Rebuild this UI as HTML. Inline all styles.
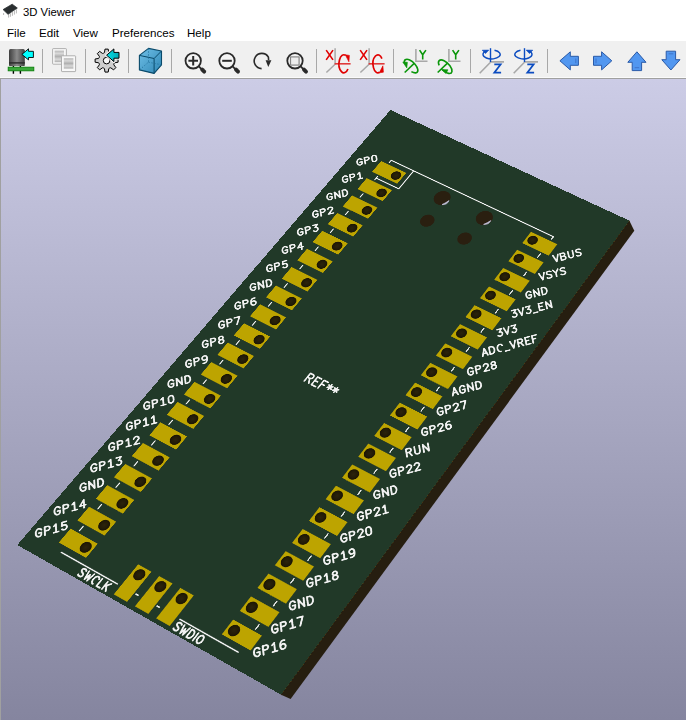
<!DOCTYPE html>
<html><head><meta charset="utf-8"><style>
*{margin:0;padding:0}
html,body{width:686px;height:720px;overflow:hidden;background:#fff;font-family:"Liberation Sans",sans-serif}
#title{position:absolute;left:0;top:0;width:686px;height:24px;background:#fff}
#title span{position:absolute;left:23px;top:6px;font-size:11.3px;color:#000}
#menu{position:absolute;left:0;top:24px;width:686px;height:17px;background:#fff;font-size:11.6px}
#menu span{position:absolute;top:2px}
#tb{position:absolute;left:0;top:41px;width:686px;height:36px;background:#f0f0f0}
#tbl{position:absolute;left:0;top:77px;width:686px;height:1px;background:#fafafa;border-bottom:1px solid #a0a0a0}
#canvas{position:absolute;left:0;top:79px;width:686px;box-sizing:border-box;border-left:1px solid #a0a0a0;height:641px;background:linear-gradient(to bottom,rgb(204,204,230) 0px,rgb(102,102,128) 921px);overflow:hidden}
#board{position:absolute;left:0;top:0;width:628px;height:1158px;transform-origin:0 0;transform:matrix3d(0.343303547,0.163261048,0,-5.89616544e-05,-0.324420307,0.308215292,0,-0.00012372913,0,0,1,0,390.5,110,0,1);background:#213928}
#side{position:absolute;left:0;top:0}
</style></head><body>
<div id="title"><svg width="22" height="22" style="position:absolute;left:0;top:0"><path d="M8.6 14.2 V17.6 M10.4 13.2 V16.8 M12.4 12.0 V15.8 M14.4 10.6 V14.6 M16.4 9.2 V13.4 M3.6 13.0 V15.0" stroke="#b8b8b8" stroke-width="1"/><polygon points="3.1,9.6 12.2,4.2 17.3,8.0 8.0,14.3" fill="#2a2e30" stroke="#2a2e30" stroke-width="0.8" stroke-linejoin="round"/></svg><span>3D Viewer</span></div>
<div id="menu"><span style="left:7px">File</span><span style="left:39px">Edit</span><span style="left:73px">View</span><span style="left:112px">Preferences</span><span style="left:187px">Help</span></div>
<div id="tb"></div><svg width="686" height="80" style="position:absolute;left:0;top:0"><defs><linearGradient id="capg" x1="0" x2="1" y1="0" y2="0"><stop offset="0" stop-color="#3e3e3e"/><stop offset="0.5" stop-color="#8a8a8a"/><stop offset="1" stop-color="#3e3e3e"/></linearGradient><linearGradient id="cyang" x1="0" x2="1"><stop offset="0" stop-color="#00e0e8"/><stop offset="1" stop-color="#00a8b4"/></linearGradient><linearGradient id="docg" x1="0" x2="0" y1="0" y2="1"><stop offset="0" stop-color="#b8b8b8"/><stop offset="0.25" stop-color="#d8d8d8"/><stop offset="0.5" stop-color="#b0b0b0"/><stop offset="0.75" stop-color="#d8d8d8"/><stop offset="1" stop-color="#b0b0b0"/></linearGradient><linearGradient id="cubeg" x1="0" x2="1" y1="0" y2="1"><stop offset="0" stop-color="#70c0e8"/><stop offset="1" stop-color="#2e86b4"/></linearGradient></defs><rect x="42" y="49" width="1" height="24" fill="#a8a8a8"/><rect x="85" y="49" width="1" height="24" fill="#a8a8a8"/><rect x="128" y="49" width="1" height="24" fill="#a8a8a8"/><rect x="171" y="49" width="1" height="24" fill="#a8a8a8"/><rect x="316" y="49" width="1" height="24" fill="#a8a8a8"/><rect x="393" y="49" width="1" height="24" fill="#a8a8a8"/><rect x="470" y="49" width="1" height="24" fill="#a8a8a8"/><rect x="547" y="49" width="1" height="24" fill="#a8a8a8"/><path d="M13.4 65.5 V67.2 M20.4 65.5 V67.2 M13.4 70.8 V73.8 M20.4 70.8 V73.8" stroke="#000" stroke-width="1.4"/><path d="M9 50.6 Q9 49 10.6 49 H23.2 Q24.8 49 24.8 50.6 V65.2 Q24.8 65.9 24 65.9 H9.8 Q9 65.9 9 65.2 Z" fill="url(#capg)"/><rect x="9" y="62.2" width="15.8" height="1.4" fill="#2a2a2a"/><rect x="8.2" y="67.2" width="25.6" height="3.6" fill="#3aa83a" stroke="#0a800a" stroke-width="0.9"/><path d="M21.9 54.4 L28.5 48.8 V51.3 H33.4 V57.5 H28.5 V59.9 Z" fill="#00ffff" stroke="#000" stroke-width="0.9" stroke-linejoin="miter"/><rect x="52.6" y="48.6" width="13.8" height="15.6" rx="0.6" fill="#f8f8f8" stroke="#a8a8a8" stroke-width="0.9"/><rect x="54.6" y="50.6" width="9.4" height="11.6" fill="url(#docg)"/><rect x="61.5" y="55.8" width="14.1" height="15.8" rx="0.6" fill="#f8f8f8" stroke="#a8a8a8" stroke-width="0.9"/><rect x="63.8" y="58.2" width="9.6" height="10.4" fill="url(#docg)"/><polygon points="104.45,52.58 104.99,49.11 108.21,49.11 108.75,52.58 109.66,53.21 110.75,53.41 113.58,51.34 115.86,53.62 113.79,56.45 113.99,57.54 114.62,58.45 118.09,58.99 118.09,62.21 114.62,62.75 113.99,63.66 113.79,64.75 115.86,67.58 113.58,69.86 110.75,67.79 109.66,67.99 108.75,68.62 108.21,72.09 104.99,72.09 104.45,68.62 103.54,67.99 102.45,67.79 99.62,69.86 97.34,67.58 99.41,64.75 99.21,63.66 98.58,62.75 95.11,62.21 95.11,58.99 98.58,58.45 99.21,57.54 99.41,56.45 97.34,53.62 99.62,51.34 102.45,53.41 103.54,53.21" fill="#cfcfcf" stroke="#000" stroke-width="1" stroke-linejoin="round"/><circle cx="106.60" cy="60.60" r="3.3" fill="#f8f8f8" stroke="#000" stroke-width="1"/><path d="M106.6 55.2 L113.9 48.9 V52.4 H119.0 V58.2 H113.9 V61.6 Z" fill="#f4f4f4" stroke="#f4f4f4" stroke-width="3" stroke-linejoin="round"/><path d="M106.6 55.2 L113.9 48.9 V52.4 H119.0 V58.2 H113.9 V61.6 Z" fill="url(#cyang)" stroke="#000" stroke-width="1" stroke-linejoin="miter"/><path d="M139.4 55.4 L148.5 48.4 L161.5 51 V64.8 L154.1 73.4 L139.4 69.9 Z" fill="url(#cubeg)" stroke="#0a4a6a" stroke-width="1.1" stroke-linejoin="round"/><path d="M139.4 55.4 L154.1 58.5 L161.5 51 M154.1 58.5 V73.4" fill="none" stroke="#0a4a6a" stroke-width="1"/><path d="M148.5 48.4 V62.2 L139.4 69.9 M148.5 62.2 L161.5 64.8" fill="none" stroke="#1a6a94" stroke-width="0.8" stroke-dasharray="1.2 1.8"/><circle cx="193.20" cy="60.8" r="7.7" fill="#f4f4f4" stroke="#2a2a2a" stroke-width="1.8"/><path d="M198.60 66.2 L202.00 69.6" stroke="#2a2a2a" stroke-width="1.8"/><path d="M202.20 69.6 L204.20 71.6" stroke="#2a2a2a" stroke-width="3.9" stroke-linecap="round"/><path d="M188.40 60.8 H198.00 M193.20 56.0 V65.6" stroke="#2a2a2a" stroke-width="2"/><circle cx="227.00" cy="60.8" r="7.7" fill="#f4f4f4" stroke="#2a2a2a" stroke-width="1.8"/><path d="M232.40 66.2 L235.80 69.6" stroke="#2a2a2a" stroke-width="1.8"/><path d="M236.00 69.6 L238.00 71.6" stroke="#2a2a2a" stroke-width="3.9" stroke-linecap="round"/><path d="M222.20 60.8 H231.80" stroke="#2a2a2a" stroke-width="2"/><path d="M261.6 68.6 A7.6 7.6 0 1 1 268.4 57.2 L268.6 60.0" stroke="#2a2a2a" stroke-width="1.6" fill="none"/><path d="M265.6 60.2 L271.4 60.2 L268.3 67.0 Z" fill="#2a2a2a"/><circle cx="295.00" cy="60.8" r="7.7" fill="#f4f4f4" stroke="#2a2a2a" stroke-width="1.8"/><path d="M300.40 66.2 L303.80 69.6" stroke="#2a2a2a" stroke-width="1.8"/><path d="M304.00 69.6 L306.00 71.6" stroke="#2a2a2a" stroke-width="3.9" stroke-linecap="round"/><rect x="290.50" y="56.9" width="8.6" height="8.2" fill="#ececec" stroke="#858585" stroke-width="1.2"/><path d="M326.20 50.1 L333.00 59.9 M333.00 50.1 L326.20 59.9" stroke="#e00000" stroke-width="1.6" fill="none"/><path d="M335.10 48.2 V64.2 L326.40 72.5" stroke="#a8a8a8" stroke-width="1.5" fill="none"/><path d="M334.60 63.8 H350.60" stroke="#e03a3a" stroke-width="1.6" fill="none"/><path d="M347.92 68.93 A4.90 9.00 0 1 1 345.61 55.34" stroke="#e00000" stroke-width="1.7" fill="none"/><path d="M345.30 54.8 L349.40 55.4 L348.90 61.8 Z" fill="#e00000" stroke="#e00000" stroke-width="0.6" stroke-linejoin="round"/><path d="M360.20 50.1 L367.00 59.9 M367.00 50.1 L360.20 59.9" stroke="#e00000" stroke-width="1.6" fill="none"/><path d="M369.10 48.2 V64.2 L360.40 72.5" stroke="#a8a8a8" stroke-width="1.5" fill="none"/><path d="M368.60 63.8 H384.60" stroke="#e03a3a" stroke-width="1.6" fill="none"/><path d="M381.92 58.67 A4.90 9.00 0 1 0 379.61 72.26" stroke="#e00000" stroke-width="1.7" fill="none"/><path d="M379.30 72.8 L383.40 72.2 L382.90 65.8 Z" fill="#e00000" stroke="#e00000" stroke-width="0.6" stroke-linejoin="round"/><path d="M415.90 49.1 V61.3 H427.50" stroke="#a8a8a8" stroke-width="1.6" fill="none"/><path d="M419.60 50.1 L422.70 54.8 L425.90 50.1 M422.70 54.8 V59.4" stroke="#0a960a" stroke-width="1.6" fill="none"/><path d="M404.70 72.5 L414.20 63.4" stroke="#0a960a" stroke-width="1.6" fill="none"/><path d="M411.40 71.6 A8.6 4.2 45 1 0 404.60 63.6" stroke="#0a960a" stroke-width="1.6" fill="none" transform=""/><path d="M402.80 62.0 L407.40 62.3 L406.80 67.9 Z" fill="#0a960a" stroke="#0a960a" stroke-width="0.6" stroke-linejoin="round"/><path d="M448.90 49.1 V61.3 H460.50" stroke="#a8a8a8" stroke-width="1.6" fill="none"/><path d="M452.60 50.1 L455.70 54.8 L458.90 50.1 M455.70 54.8 V59.4" stroke="#0a960a" stroke-width="1.6" fill="none"/><path d="M437.70 72.5 L447.20 63.4" stroke="#0a960a" stroke-width="1.6" fill="none"/><path d="M439.20 65.4 A8.6 4.2 45 1 1 442.40 69.8" stroke="#0a960a" stroke-width="1.6" fill="none"/><path d="M441.40 69.5 L448.00 69.8 L446.00 73.4 Z" fill="#0a960a" stroke="#0a960a" stroke-width="0.6" stroke-linejoin="round"/><path d="M490.50 61.9 H504.00 M490.50 62.2 L479.70 73.2" stroke="#a8a8a8" stroke-width="1.6" fill="none"/><path d="M490.50 48.2 V62.0" stroke="#0c4cc0" stroke-width="1.4" fill="none"/><path d="M494.50 50.2 A8.6 4.5 0 1 1 485.60 51.2" stroke="#0c4cc0" stroke-width="1.4" fill="none"/><path d="M482.20 50.2 L488.80 50.1 L485.50 53.6 Z" fill="#0c4cc0" stroke="#0c4cc0" stroke-width="0.6" stroke-linejoin="round"/><path d="M494.30 64.3 H500.70 L494.30 72.7 H501.10" stroke="#0c4cc0" stroke-width="1.7" fill="none" stroke-linejoin="miter"/><path d="M524.50 61.9 H538.00 M524.50 62.2 L513.70 73.2" stroke="#a8a8a8" stroke-width="1.6" fill="none"/><path d="M524.50 48.2 V62.0" stroke="#0c4cc0" stroke-width="1.4" fill="none"/><path d="M520.50 50.2 A8.6 4.5 0 1 0 529.40 51.2" stroke="#0c4cc0" stroke-width="1.4" fill="none"/><path d="M526.20 50.1 L532.80 50.2 L529.50 53.6 Z" fill="#0c4cc0" stroke="#0c4cc0" stroke-width="0.6" stroke-linejoin="round"/><path d="M527.30 64.3 H533.70 L527.30 72.7 H534.10" stroke="#0c4cc0" stroke-width="1.7" fill="none" stroke-linejoin="miter"/><path d="M559.9 60.8 L570.3 51.8 V56.3 H578.4 V65.3 H570.3 V69.9 Z" fill="#5297f0" stroke="#2a5aa8" stroke-width="1" stroke-linejoin="miter"/><path d="M575.8 58.5 V63.2" stroke="#3a6ac0" stroke-width="0.8"/><path d="M611.8 60.8 L601.6 51.8 V56.3 H593.5 V65.3 H601.6 V69.9 Z" fill="#5297f0" stroke="#2a5aa8" stroke-width="1" stroke-linejoin="miter"/><path d="M596.0 58.5 V63.2" stroke="#3a6ac0" stroke-width="0.8"/><path d="M636.9 51.8 L646.0 62.3 H641.6 V70.6 H632.2 V62.3 H627.8 Z" fill="#5297f0" stroke="#2a5aa8" stroke-width="1" stroke-linejoin="miter"/><path d="M634.7 67.7 H639.2" stroke="#3a6ac0" stroke-width="0.8"/><path d="M670.9 70.0 L680.0 59.7 H675.6 V51.2 H666.2 V59.7 H661.8 Z" fill="#5297f0" stroke="#2a5aa8" stroke-width="1" stroke-linejoin="miter"/><path d="M668.6 53.8 H673.3" stroke="#3a6ac0" stroke-width="0.8"/></svg><div id="tbl"></div>
<div id="canvas"></div>
<svg id="side" width="686" height="720"><polygon points="629.40,220.70 634.30,230.80 290.60,699.00 281.10,694.70" fill="#261e10"/><line x1="629.4" y1="220.7" x2="281.1" y2="694.7" stroke="#261e10" stroke-width="1.6"/></svg>
<div id="board"><svg width="628" height="1158"><defs><radialGradient id="hole" cx="0.5" cy="0.5" r="0.5"><stop offset="0" stop-color="#2c240c"/><stop offset="0.7" stop-color="#221b07"/><stop offset="1" stop-color="#1a1404"/></radialGradient></defs><rect x="66.000" y="120.800" width="67.000" height="32.000" fill="#bda400"/><ellipse cx="117.800" cy="136.800" rx="11.000" ry="11.000" fill="url(#hole)"/><rect x="458.400" y="120.800" width="67.000" height="32.000" fill="#bda400"/><ellipse cx="473.600" cy="136.800" rx="11.000" ry="11.000" fill="url(#hole)"/><rect x="66.000" y="171.600" width="67.000" height="32.000" fill="#bda400"/><ellipse cx="117.800" cy="187.600" rx="11.000" ry="11.000" fill="url(#hole)"/><rect x="458.400" y="171.600" width="67.000" height="32.000" fill="#bda400"/><ellipse cx="473.600" cy="187.600" rx="11.000" ry="11.000" fill="url(#hole)"/><rect x="66.000" y="222.400" width="67.000" height="32.000" fill="#bda400"/><ellipse cx="117.800" cy="238.400" rx="11.000" ry="11.000" fill="url(#hole)"/><rect x="458.400" y="222.400" width="67.000" height="32.000" fill="#bda400"/><ellipse cx="473.600" cy="238.400" rx="11.000" ry="11.000" fill="url(#hole)"/><rect x="66.000" y="273.200" width="67.000" height="32.000" fill="#bda400"/><ellipse cx="117.800" cy="289.200" rx="11.000" ry="11.000" fill="url(#hole)"/><rect x="458.400" y="273.200" width="67.000" height="32.000" fill="#bda400"/><ellipse cx="473.600" cy="289.200" rx="11.000" ry="11.000" fill="url(#hole)"/><rect x="66.000" y="324.000" width="67.000" height="32.000" fill="#bda400"/><ellipse cx="117.800" cy="340.000" rx="11.000" ry="11.000" fill="url(#hole)"/><rect x="458.400" y="324.000" width="67.000" height="32.000" fill="#bda400"/><ellipse cx="473.600" cy="340.000" rx="11.000" ry="11.000" fill="url(#hole)"/><rect x="66.000" y="374.800" width="67.000" height="32.000" fill="#bda400"/><ellipse cx="117.800" cy="390.800" rx="11.000" ry="11.000" fill="url(#hole)"/><rect x="458.400" y="374.800" width="67.000" height="32.000" fill="#bda400"/><ellipse cx="473.600" cy="390.800" rx="11.000" ry="11.000" fill="url(#hole)"/><rect x="66.000" y="425.600" width="67.000" height="32.000" fill="#bda400"/><ellipse cx="117.800" cy="441.600" rx="11.000" ry="11.000" fill="url(#hole)"/><rect x="458.400" y="425.600" width="67.000" height="32.000" fill="#bda400"/><ellipse cx="473.600" cy="441.600" rx="11.000" ry="11.000" fill="url(#hole)"/><rect x="66.000" y="476.400" width="67.000" height="32.000" fill="#bda400"/><ellipse cx="117.800" cy="492.400" rx="11.000" ry="11.000" fill="url(#hole)"/><rect x="458.400" y="476.400" width="67.000" height="32.000" fill="#bda400"/><ellipse cx="473.600" cy="492.400" rx="11.000" ry="11.000" fill="url(#hole)"/><rect x="66.000" y="527.200" width="67.000" height="32.000" fill="#bda400"/><ellipse cx="117.800" cy="543.200" rx="11.000" ry="11.000" fill="url(#hole)"/><rect x="458.400" y="527.200" width="67.000" height="32.000" fill="#bda400"/><ellipse cx="473.600" cy="543.200" rx="11.000" ry="11.000" fill="url(#hole)"/><rect x="66.000" y="578.000" width="67.000" height="32.000" fill="#bda400"/><ellipse cx="117.800" cy="594.000" rx="11.000" ry="11.000" fill="url(#hole)"/><rect x="458.400" y="578.000" width="67.000" height="32.000" fill="#bda400"/><ellipse cx="473.600" cy="594.000" rx="11.000" ry="11.000" fill="url(#hole)"/><rect x="66.000" y="628.800" width="67.000" height="32.000" fill="#bda400"/><ellipse cx="117.800" cy="644.800" rx="11.000" ry="11.000" fill="url(#hole)"/><rect x="458.400" y="628.800" width="67.000" height="32.000" fill="#bda400"/><ellipse cx="473.600" cy="644.800" rx="11.000" ry="11.000" fill="url(#hole)"/><rect x="66.000" y="679.600" width="67.000" height="32.000" fill="#bda400"/><ellipse cx="117.800" cy="695.600" rx="11.000" ry="11.000" fill="url(#hole)"/><rect x="458.400" y="679.600" width="67.000" height="32.000" fill="#bda400"/><ellipse cx="473.600" cy="695.600" rx="11.000" ry="11.000" fill="url(#hole)"/><rect x="66.000" y="730.400" width="67.000" height="32.000" fill="#bda400"/><ellipse cx="117.800" cy="746.400" rx="11.000" ry="11.000" fill="url(#hole)"/><rect x="458.400" y="730.400" width="67.000" height="32.000" fill="#bda400"/><ellipse cx="473.600" cy="746.400" rx="11.000" ry="11.000" fill="url(#hole)"/><rect x="66.000" y="781.200" width="67.000" height="32.000" fill="#bda400"/><ellipse cx="117.800" cy="797.200" rx="11.000" ry="11.000" fill="url(#hole)"/><rect x="458.400" y="781.200" width="67.000" height="32.000" fill="#bda400"/><ellipse cx="473.600" cy="797.200" rx="11.000" ry="11.000" fill="url(#hole)"/><rect x="66.000" y="832.000" width="67.000" height="32.000" fill="#bda400"/><ellipse cx="117.800" cy="848.000" rx="11.000" ry="11.000" fill="url(#hole)"/><rect x="458.400" y="832.000" width="67.000" height="32.000" fill="#bda400"/><ellipse cx="473.600" cy="848.000" rx="11.000" ry="11.000" fill="url(#hole)"/><rect x="66.000" y="882.800" width="67.000" height="32.000" fill="#bda400"/><ellipse cx="117.800" cy="898.800" rx="11.000" ry="11.000" fill="url(#hole)"/><rect x="458.400" y="882.800" width="67.000" height="32.000" fill="#bda400"/><ellipse cx="473.600" cy="898.800" rx="11.000" ry="11.000" fill="url(#hole)"/><rect x="66.000" y="933.600" width="67.000" height="32.000" fill="#bda400"/><ellipse cx="117.800" cy="949.600" rx="11.000" ry="11.000" fill="url(#hole)"/><rect x="458.400" y="933.600" width="67.000" height="32.000" fill="#bda400"/><ellipse cx="473.600" cy="949.600" rx="11.000" ry="11.000" fill="url(#hole)"/><rect x="66.000" y="984.400" width="67.000" height="32.000" fill="#bda400"/><ellipse cx="117.800" cy="1000.400" rx="11.000" ry="11.000" fill="url(#hole)"/><rect x="458.400" y="984.400" width="67.000" height="32.000" fill="#bda400"/><ellipse cx="473.600" cy="1000.400" rx="11.000" ry="11.000" fill="url(#hole)"/><rect x="66.000" y="1035.200" width="67.000" height="32.000" fill="#bda400"/><ellipse cx="117.800" cy="1051.200" rx="11.000" ry="11.000" fill="url(#hole)"/><rect x="458.400" y="1035.200" width="67.000" height="32.000" fill="#bda400"/><ellipse cx="473.600" cy="1051.200" rx="11.000" ry="11.000" fill="url(#hole)"/><rect x="66.000" y="1086.000" width="67.000" height="32.000" fill="#bda400"/><ellipse cx="117.800" cy="1102.000" rx="11.000" ry="11.000" fill="url(#hole)"/><rect x="458.400" y="1086.000" width="67.000" height="32.000" fill="#bda400"/><ellipse cx="473.600" cy="1102.000" rx="11.000" ry="11.000" fill="url(#hole)"/><rect x="228.900" y="1082.800" width="32.000" height="67.000" fill="#bda400"/><ellipse cx="244.900" cy="1098.000" rx="11.000" ry="11.000" fill="url(#hole)"/><rect x="279.700" y="1082.800" width="32.000" height="67.000" fill="#bda400"/><ellipse cx="295.700" cy="1098.000" rx="11.000" ry="11.000" fill="url(#hole)"/><rect x="330.500" y="1082.800" width="32.000" height="67.000" fill="#bda400"/><ellipse cx="346.500" cy="1098.000" rx="11.000" ry="11.000" fill="url(#hole)"/><ellipse cx="240.600" cy="138.000" rx="18.000" ry="18.000" fill="#2a1f10"/><ellipse cx="350.600" cy="138.000" rx="18.000" ry="18.000" fill="#2a1f10"/><ellipse cx="247.200" cy="200.000" rx="15.200" ry="15.200" fill="#2a1f10"/><ellipse cx="344.000" cy="200.000" rx="15.200" ry="15.200" fill="#2a1f10"/><path d="M84.000 116.000 L84.000 109.000 L507.400 109.000 L507.400 116.000 M144.000 109.000 L144.000 162.000 L84.000 162.000 L84.000 158.000 M84.000 157.400 L84.000 167.000 M507.400 157.400 L507.400 167.000 M84.000 208.200 L84.000 217.800 M507.400 208.200 L507.400 217.800 M84.000 259.000 L84.000 268.600 M507.400 259.000 L507.400 268.600 M84.000 309.800 L84.000 319.400 M507.400 309.800 L507.400 319.400 M84.000 360.600 L84.000 370.200 M507.400 360.600 L507.400 370.200 M84.000 411.400 L84.000 421.000 M507.400 411.400 L507.400 421.000 M84.000 462.200 L84.000 471.800 M507.400 462.200 L507.400 471.800 M84.000 513.000 L84.000 522.600 M507.400 513.000 L507.400 522.600 M84.000 563.800 L84.000 573.400 M507.400 563.800 L507.400 573.400 M84.000 614.600 L84.000 624.200 M507.400 614.600 L507.400 624.200 M84.000 665.400 L84.000 675.000 M507.400 665.400 L507.400 675.000 M84.000 716.200 L84.000 725.800 M507.400 716.200 L507.400 725.800 M84.000 767.000 L84.000 776.600 M507.400 767.000 L507.400 776.600 M84.000 817.800 L84.000 827.400 M507.400 817.800 L507.400 827.400 M84.000 868.600 L84.000 878.200 M507.400 868.600 L507.400 878.200 M84.000 919.400 L84.000 929.000 M507.400 919.400 L507.400 929.000 M84.000 970.200 L84.000 979.800 M507.400 970.200 L507.400 979.800 M84.000 1021.000 L84.000 1030.600 M507.400 1021.000 L507.400 1030.600 M84.000 1071.800 L84.000 1081.400 M507.400 1071.800 L507.400 1081.400 M84.000 1131.000 L220.800 1131.000 M370.600 1131.000 L507.400 1131.000 M265.000 1130.400 L270.400 1130.400 M315.800 1130.400 L321.200 1130.400" fill="none" stroke="#f2f2f2" stroke-width="2.600" stroke-linecap="round" stroke-linejoin="round"/><path fill="none" stroke="#f2f2f2" stroke-width="3.500" stroke-linecap="round" stroke-linejoin="round" d="M26.49 137.40 L24.31 136.94 L22.34 137.15 L20.76 138.01 L19.72 139.45 L19.32 141.32 L19.59 143.46 L20.51 145.67 L21.99 147.74 L23.89 149.49 L26.05 150.74 L28.25 151.39 L30.30 151.37 L32.01 150.69 L33.21 149.40 L33.81 147.64 L33.73 145.55 L30.37 141.61 L27.19 144.79 M40.21 142.59 L28.19 130.57 L32.05 126.71 L32.05 126.71 L33.87 125.69 L36.01 125.75 L37.89 126.88 L39.02 128.76 L39.08 130.90 L38.06 132.72 L34.20 136.58 M42.77 123.20 L41.42 120.94 L41.35 118.38 L42.57 116.19 L44.76 114.97 L47.32 115.04 L49.58 116.39 L54.39 121.20 L55.74 123.45 L55.81 126.02 L54.59 128.21 L52.40 129.43 L49.84 129.36 L47.58 128.01 L42.77 123.20 M26.64 188.20 L24.45 187.74 L22.48 187.95 L20.91 188.81 L19.87 190.25 L19.47 192.12 L19.74 194.26 L20.65 196.47 L22.14 198.54 L24.04 200.29 L26.20 201.54 L28.40 202.19 L30.45 202.17 L32.16 201.49 L33.36 200.20 L33.95 198.44 L33.87 196.35 L30.51 192.41 L27.33 195.59 M40.35 193.39 L28.33 181.37 L32.20 177.51 L32.20 177.51 L34.02 176.49 L36.16 176.55 L38.04 177.68 L39.16 179.56 L39.22 181.70 L38.21 183.52 L34.34 187.38 M42.75 172.25 L42.94 166.76 L54.97 178.78 M51.78 181.96 L57.92 175.83 M25.70 240.08 L23.52 239.62 L21.55 239.83 L19.97 240.69 L18.93 242.13 L18.53 244.00 L18.80 246.14 L19.72 248.35 L21.20 250.43 L23.11 252.17 L25.26 253.42 L27.47 254.07 L29.52 254.05 L31.22 253.37 L32.43 252.08 L33.02 250.32 L32.94 248.23 L29.58 244.30 L26.40 247.48 M39.46 245.23 L27.44 233.21 L46.51 238.19 L34.49 226.17 M53.93 230.76 L51.09 233.60 L39.07 221.58 L41.91 218.74 L41.91 218.74 L43.98 217.59 L46.64 217.53 L49.51 218.57 L52.13 220.55 L54.11 223.17 L55.14 226.03 L55.08 228.70 L53.93 230.76 M26.93 289.80 L24.75 289.34 L22.78 289.55 L21.20 290.41 L20.16 291.85 L19.76 293.72 L20.03 295.86 L20.95 298.07 L22.43 300.14 L24.34 301.89 L26.49 303.14 L28.70 303.79 L30.75 303.77 L32.45 303.09 L33.66 301.80 L34.25 300.04 L34.17 297.95 L30.81 294.01 L27.63 297.19 M40.65 294.99 L28.63 282.97 L32.49 279.11 L32.49 279.11 L34.31 278.09 L36.45 278.15 L38.34 279.28 L39.46 281.16 L39.52 283.30 L38.50 285.12 L34.64 288.98 M42.44 274.73 L41.62 272.54 L41.94 270.21 L43.32 268.30 L45.44 267.27 L47.78 267.36 L49.79 268.55 L50.76 269.98 L51.62 284.02 L58.67 276.97 M27.08 340.60 L24.90 340.14 L22.93 340.35 L21.35 341.21 L20.31 342.65 L19.91 344.52 L20.18 346.66 L21.10 348.87 L22.58 350.94 L24.48 352.69 L26.64 353.94 L28.84 354.59 L30.89 354.57 L32.60 353.89 L33.80 352.60 L34.39 350.84 L34.32 348.75 L30.96 344.81 L27.78 347.99 M40.80 345.79 L28.78 333.77 L32.64 329.91 L32.64 329.91 L34.46 328.89 L36.60 328.95 L38.48 330.08 L39.61 331.96 L39.67 334.10 L38.65 335.92 L34.79 339.78 M40.32 322.23 L46.57 315.98 L47.63 324.54 L47.73 323.96 L49.99 322.69 L52.64 322.77 L54.98 324.16 L56.37 326.50 L56.44 329.15 L55.18 331.41 L52.92 332.67 L50.27 332.60 M27.23 391.40 L25.04 390.94 L23.07 391.15 L21.50 392.01 L20.46 393.45 L20.06 395.32 L20.33 397.46 L21.24 399.67 L22.72 401.74 L24.63 403.49 L26.79 404.74 L28.99 405.39 L31.04 405.37 L32.75 404.69 L33.95 403.40 L34.54 401.64 L34.46 399.55 L31.10 395.61 L27.92 398.79 M40.94 396.59 L28.92 384.57 L32.79 380.71 L32.79 380.71 L34.61 379.69 L36.75 379.75 L38.63 380.88 L39.75 382.76 L39.81 384.90 L38.80 386.72 L34.93 390.58 M57.03 380.51 L45.01 368.48 L47.96 381.88 L55.34 374.50 M27.37 442.20 L25.19 441.74 L23.22 441.95 L21.64 442.81 L20.61 444.25 L20.20 446.12 L20.47 448.26 L21.39 450.47 L22.87 452.54 L24.78 454.29 L26.93 455.54 L29.14 456.19 L31.19 456.17 L32.90 455.49 L34.10 454.20 L34.69 452.44 L34.61 450.35 L31.25 446.41 L28.07 449.59 M41.09 447.39 L29.07 435.37 L32.93 431.51 L32.93 431.51 L34.76 430.49 L36.89 430.55 L38.78 431.68 L39.90 433.56 L39.96 435.70 L38.94 437.52 L35.08 441.38 M46.41 418.04 L40.95 423.49 L45.80 429.47 L46.51 428.57 L47.61 425.76 L50.16 424.17 L53.24 424.40 L55.74 426.34 L56.75 429.31 L55.91 432.22 L53.52 434.03 L50.44 434.08 M26.44 494.08 L24.26 493.62 L22.29 493.83 L20.71 494.69 L19.67 496.13 L19.27 498.00 L19.54 500.14 L20.46 502.35 L21.94 504.43 L23.84 506.17 L26.00 507.42 L28.20 508.07 L30.25 508.05 L31.96 507.37 L33.16 506.08 L33.76 504.32 L33.68 502.23 L30.32 498.30 L27.14 501.48 M40.20 499.23 L28.18 487.21 L47.24 492.19 L35.22 480.17 M54.67 484.76 L51.83 487.60 L39.81 475.58 L42.65 472.74 L42.65 472.74 L44.72 471.59 L47.38 471.53 L50.24 472.57 L52.86 474.55 L54.84 477.17 L55.88 480.03 L55.82 482.70 L54.67 484.76 M27.67 543.80 L25.49 543.34 L23.52 543.55 L21.94 544.41 L20.90 545.85 L20.50 547.72 L20.77 549.86 L21.69 552.07 L23.17 554.14 L25.07 555.89 L27.23 557.14 L29.43 557.79 L31.48 557.77 L33.19 557.09 L34.39 555.80 L34.98 554.04 L34.91 551.95 L31.55 548.01 L28.37 551.19 M41.39 548.99 L29.37 536.97 L33.23 533.11 L33.23 533.11 L35.05 532.09 L37.19 532.15 L39.07 533.28 L40.19 535.16 L40.26 537.30 L39.24 539.12 L35.38 542.98 M46.49 520.33 L44.32 522.02 L43.11 524.67 L43.55 528.07 L45.75 531.41 L48.76 534.41 L48.76 534.41 L47.41 532.15 L47.34 529.58 L48.56 527.40 L50.74 526.18 L53.31 526.25 L55.57 527.60 L56.92 529.85 L56.99 532.42 L55.77 534.61 L53.58 535.83 L51.02 535.76 L48.76 534.41 M27.81 594.60 L25.63 594.14 L23.66 594.35 L22.09 595.21 L21.05 596.65 L20.65 598.52 L20.92 600.66 L21.83 602.87 L23.31 604.94 L25.22 606.69 L27.38 607.94 L29.58 608.59 L31.63 608.57 L33.34 607.89 L34.54 606.60 L35.13 604.84 L35.05 602.75 L31.69 598.81 L28.51 601.99 M41.53 599.79 L29.51 587.77 L33.37 583.91 L33.37 583.91 L35.20 582.89 L37.34 582.95 L39.22 584.08 L40.34 585.96 L40.40 588.10 L39.39 589.92 L35.52 593.78 M40.37 576.91 L47.42 569.87 L54.89 586.43 M27.96 645.40 L25.78 644.94 L23.81 645.15 L22.23 646.01 L21.20 647.45 L20.79 649.32 L21.06 651.46 L21.98 653.67 L23.46 655.74 L25.37 657.49 L27.52 658.74 L29.73 659.39 L31.78 659.37 L33.48 658.69 L34.69 657.40 L35.28 655.64 L35.20 653.55 L31.84 649.61 L28.66 652.79 M41.68 650.59 L29.66 638.57 L33.52 634.71 L33.52 634.71 L35.34 633.69 L37.48 633.75 L39.37 634.88 L40.49 636.76 L40.55 638.90 L39.53 640.72 L35.67 644.58 M49.57 629.72 L47.73 630.82 L45.63 630.89 L43.85 629.91 L42.87 628.13 L42.94 626.04 L44.04 624.19 L45.89 623.08 L47.98 623.01 L49.76 624.00 L50.75 625.78 L50.68 627.87 L49.57 629.72 M49.57 629.72 L51.71 628.45 L54.15 628.39 L56.23 629.56 L57.39 631.64 L57.33 634.07 L56.06 636.21 L53.93 637.48 L51.49 637.54 L49.41 636.37 L48.24 634.29 L48.30 631.86 L49.57 629.72 M28.11 696.20 L25.93 695.74 L23.96 695.95 L22.38 696.81 L21.34 698.25 L20.94 700.12 L21.21 702.26 L22.13 704.47 L23.61 706.54 L25.52 708.29 L27.67 709.54 L29.88 710.19 L31.93 710.17 L33.63 709.49 L34.84 708.20 L35.43 706.44 L35.35 704.35 L31.99 700.41 L28.81 703.59 M41.83 701.39 L29.81 689.37 L33.67 685.51 L33.67 685.51 L35.49 684.49 L37.63 684.55 L39.51 685.68 L40.64 687.56 L40.70 689.70 L39.68 691.52 L35.82 695.38 M51.21 675.19 L52.55 677.45 L52.62 680.01 L51.40 682.20 L49.22 683.42 L46.65 683.35 L44.39 682.00 L43.04 679.74 L42.97 677.18 L44.19 674.99 L46.38 673.77 L48.95 673.84 L51.21 675.19 L54.21 678.19 L56.41 681.52 L56.97 685.05 L55.64 687.58 L53.47 689.27 M27.17 748.08 L24.99 747.62 L23.02 747.83 L21.45 748.69 L20.41 750.13 L20.01 752.00 L20.28 754.14 L21.19 756.35 L22.67 758.43 L24.58 760.17 L26.74 761.42 L28.94 762.07 L30.99 762.05 L32.70 761.37 L33.90 760.08 L34.49 758.32 L34.41 756.23 L31.05 752.30 L27.87 755.48 M40.94 753.23 L28.92 741.21 L47.98 746.19 L35.96 734.17 M55.41 738.76 L52.57 741.60 L40.55 729.58 L43.39 726.74 L43.39 726.74 L45.45 725.59 L48.12 725.53 L50.98 726.57 L53.60 728.55 L55.58 731.17 L56.62 734.03 L56.56 736.70 L55.41 738.76 M17.59 808.61 L15.40 808.15 L13.43 808.37 L11.86 809.23 L10.82 810.67 L10.42 812.54 L10.69 814.68 L11.60 816.89 L13.09 818.96 L14.99 820.71 L17.15 821.96 L19.35 822.61 L21.40 822.59 L23.11 821.90 L24.31 820.62 L24.90 818.86 L24.82 816.77 L21.46 812.83 L18.28 816.01 M31.30 813.81 L19.28 801.79 L23.15 797.93 L23.15 797.93 L24.97 796.91 L27.11 796.97 L28.99 798.09 L30.11 799.98 L30.17 802.12 L29.16 803.94 L25.29 807.80 M33.70 792.66 L33.89 787.18 L45.91 799.20 M42.73 802.38 L48.87 796.25 M44.68 783.60 L43.34 781.34 L43.26 778.78 L44.49 776.59 L46.67 775.37 L49.24 775.44 L51.50 776.79 L56.31 781.60 L57.65 783.85 L57.73 786.42 L56.51 788.61 L54.32 789.83 L51.75 789.76 L49.49 788.41 L44.68 783.60 M17.73 859.41 L15.55 858.95 L13.58 859.17 L12.00 860.03 L10.97 861.47 L10.56 863.34 L10.83 865.48 L11.75 867.69 L13.23 869.76 L15.14 871.51 L17.29 872.76 L19.50 873.41 L21.55 873.39 L23.26 872.70 L24.46 871.42 L25.05 869.66 L24.97 867.57 L21.61 863.63 L18.43 866.81 M31.45 864.61 L19.43 852.59 L23.29 848.73 L23.29 848.73 L25.12 847.71 L27.26 847.77 L29.14 848.89 L30.26 850.78 L30.32 852.92 L29.30 854.74 L25.44 858.60 M33.85 843.46 L34.04 837.98 L46.06 850.00 M42.88 853.18 L49.02 847.05 M44.66 832.65 L44.86 827.16 L56.88 839.18 M53.70 842.36 L59.83 836.23 M17.88 910.21 L15.70 909.75 L13.73 909.97 L12.15 910.83 L11.11 912.27 L10.71 914.14 L10.98 916.28 L11.90 918.49 L13.38 920.56 L15.29 922.31 L17.44 923.56 L19.65 924.21 L21.70 924.19 L23.40 923.50 L24.61 922.22 L25.20 920.46 L25.12 918.37 L21.76 914.43 L18.58 917.61 M31.60 915.41 L19.58 903.39 L23.44 899.53 L23.44 899.53 L25.26 898.51 L27.40 898.57 L29.29 899.69 L30.41 901.58 L30.47 903.72 L29.45 905.54 L25.59 909.40 M33.99 894.26 L34.19 888.78 L46.21 900.80 M43.03 903.98 L49.16 897.85 M44.21 884.33 L43.39 882.14 L43.71 879.81 L45.09 877.90 L47.21 876.87 L49.55 876.96 L51.55 878.15 L52.53 879.58 L53.39 893.62 L60.44 886.57 M18.03 961.01 L15.85 960.55 L13.88 960.77 L12.30 961.63 L11.26 963.07 L10.86 964.94 L11.13 967.08 L12.05 969.29 L13.53 971.36 L15.43 973.11 L17.59 974.36 L19.79 975.01 L21.84 974.99 L23.55 974.30 L24.75 973.02 L25.34 971.26 L25.27 969.17 L21.91 965.23 L18.73 968.41 M31.75 966.21 L19.73 954.19 L23.59 950.33 L23.59 950.33 L25.41 949.31 L27.55 949.37 L29.43 950.49 L30.56 952.38 L30.62 954.52 L29.60 956.34 L25.74 960.20 M34.14 945.06 L34.34 939.58 L46.36 951.60 M43.18 954.78 L49.31 948.65 M42.09 931.83 L48.34 925.58 L49.40 934.14 L49.50 933.56 L51.76 932.29 L54.41 932.37 L56.74 933.76 L58.14 936.10 L58.21 938.75 L56.95 941.01 L54.69 942.27 L52.04 942.20 M27.91 1002.08 L25.73 1001.62 L23.76 1001.83 L22.18 1002.69 L21.15 1004.13 L20.74 1006.00 L21.01 1008.14 L21.93 1010.35 L23.41 1012.43 L25.32 1014.17 L27.47 1015.42 L29.68 1016.07 L31.73 1016.05 L33.43 1015.37 L34.64 1014.08 L35.23 1012.32 L35.15 1010.23 L31.79 1006.30 L28.61 1009.48 M41.67 1007.23 L29.65 995.21 L48.72 1000.19 L36.70 988.17 M56.14 992.76 L53.30 995.60 L41.28 983.58 L44.12 980.74 L44.12 980.74 L46.19 979.59 L48.86 979.53 L51.72 980.57 L54.34 982.55 L56.32 985.17 L57.36 988.03 L57.29 990.70 L56.14 992.76 M18.32 1062.61 L16.14 1062.15 L14.17 1062.37 L12.59 1063.23 L11.56 1064.67 L11.15 1066.54 L11.42 1068.68 L12.34 1070.89 L13.82 1072.96 L15.73 1074.71 L17.88 1075.96 L20.09 1076.61 L22.14 1076.59 L23.84 1075.90 L25.05 1074.62 L25.64 1072.86 L25.56 1070.77 L22.20 1066.83 L19.02 1070.01 M32.04 1067.81 L20.02 1055.79 L23.88 1051.93 L23.88 1051.93 L25.71 1050.91 L27.84 1050.97 L29.73 1052.09 L30.85 1053.98 L30.91 1056.12 L29.89 1057.94 L26.03 1061.80 M34.44 1046.66 L34.63 1041.18 L46.65 1053.20 M43.47 1056.38 L49.61 1050.25 M58.95 1040.91 L46.93 1028.88 L49.88 1042.28 L57.26 1034.90 M18.47 1113.41 L16.29 1112.95 L14.32 1113.17 L12.74 1114.03 L11.70 1115.47 L11.30 1117.34 L11.57 1119.48 L12.49 1121.69 L13.97 1123.76 L15.88 1125.51 L18.03 1126.76 L20.24 1127.41 L22.29 1127.39 L23.99 1126.70 L25.20 1125.42 L25.79 1123.66 L25.71 1121.57 L22.35 1117.63 L19.17 1120.81 M32.19 1118.61 L20.17 1106.59 L24.03 1102.73 L24.03 1102.73 L25.85 1101.71 L27.99 1101.77 L29.87 1102.89 L31.00 1104.78 L31.06 1106.92 L30.04 1108.74 L26.18 1112.60 M34.58 1097.46 L34.78 1091.98 L46.80 1104.00 M43.62 1107.18 L49.75 1101.05 M48.32 1078.44 L42.87 1083.89 L47.71 1089.87 L48.43 1088.97 L49.52 1086.16 L52.08 1084.57 L55.16 1084.80 L57.66 1086.74 L58.67 1089.71 L57.83 1092.62 L55.43 1094.43 L52.36 1094.48 M533.10 148.66 L548.87 156.93 L540.60 141.16 M549.64 143.42 L553.95 139.10 L553.73 139.33 L554.48 137.82 L554.28 135.95 L553.17 134.23 L551.46 133.13 L549.59 132.92 L548.08 133.68 L543.99 137.77 L556.01 149.79 L560.10 145.70 L560.10 145.70 L561.09 143.85 L560.96 141.65 L559.75 139.68 L557.78 138.46 L555.57 138.34 L553.73 139.33 M555.62 126.14 L564.03 134.55 L565.67 135.68 L567.58 136.11 L569.47 135.78 L571.05 134.75 L572.08 133.17 L572.40 131.29 L571.97 129.38 L570.85 127.74 L562.43 119.32 M575.24 109.41 L572.67 109.57 L570.39 111.37 L568.70 113.78 L568.88 116.00 L570.92 118.05 L573.15 118.23 L579.04 115.94 L581.38 116.01 L583.41 117.58 L584.30 120.29 L582.41 123.39 L580.00 125.08 L577.56 125.36 M532.78 199.46 L548.55 207.73 L540.28 191.96 M551.66 183.47 L549.09 183.63 L546.81 185.43 L545.13 187.84 L545.31 190.06 L547.35 192.11 L549.57 192.29 L555.47 190.00 L557.80 190.07 L559.83 191.64 L560.73 194.35 L558.83 197.45 L556.43 199.14 L553.98 199.42 M553.34 178.90 L563.10 181.17 L560.84 171.41 M563.10 181.17 L569.11 187.18 M572.22 162.91 L569.65 163.07 L567.37 164.88 L565.68 167.28 L565.86 169.51 L567.90 171.55 L570.13 171.73 L576.02 169.44 L578.36 169.51 L580.39 171.09 L581.28 173.80 L579.39 176.90 L576.98 178.58 L574.54 178.86 M543.39 244.46 L541.21 244.00 L539.24 244.21 L537.67 245.07 L536.63 246.51 L536.23 248.38 L536.50 250.52 L537.41 252.73 L538.89 254.81 L540.80 256.55 L542.96 257.80 L545.16 258.45 L547.21 258.43 L548.92 257.75 L550.12 256.46 L550.71 254.70 L550.63 252.61 L547.27 248.68 L544.09 251.86 M557.16 249.61 L545.14 237.59 L564.20 242.57 L552.18 230.55 M571.63 235.14 L568.79 237.98 L556.77 225.96 L559.61 223.12 L559.61 223.12 L561.67 221.97 L564.34 221.91 L567.20 222.95 L569.82 224.93 L571.80 227.55 L572.84 230.41 L572.78 233.08 L571.63 235.14 M533.60 299.61 L539.85 293.36 L540.91 301.92 L541.01 301.34 L543.27 300.08 L545.92 300.15 L548.26 301.54 L549.65 303.88 L549.72 306.53 L548.46 308.79 L546.20 310.05 L543.55 309.98 M542.97 290.24 L558.74 298.51 L550.47 282.74 M554.16 279.05 L560.40 272.81 L561.46 281.36 L561.56 280.78 L563.82 279.52 L566.48 279.60 L568.81 280.99 L570.20 283.32 L570.28 285.98 L569.02 288.24 L566.76 289.50 L564.10 289.42 M577.36 282.78 L583.04 277.10 M591.34 265.91 L585.10 272.16 L573.08 260.13 L579.32 253.89 M578.73 265.78 L583.04 261.47 M595.79 261.46 L583.77 249.44 L602.83 254.42 L590.81 242.40 M533.29 350.41 L539.53 344.16 L540.59 352.72 L540.69 352.14 L542.95 350.88 L545.61 350.95 L547.94 352.34 L549.33 354.68 L549.41 357.33 L548.15 359.59 L545.89 360.85 L543.23 360.78 M542.65 341.04 L558.42 349.31 L550.15 333.54 M553.84 329.85 L560.09 323.61 L561.15 332.16 L561.25 331.58 L563.51 330.32 L566.16 330.40 L568.50 331.79 L569.89 334.12 L569.96 336.78 L568.70 339.04 L566.44 340.30 L563.79 340.22 M543.54 414.68 L535.27 398.91 L551.04 407.18 M540.82 409.46 L545.82 404.47 M557.16 401.06 L554.32 403.90 L542.30 391.88 L545.14 389.04 L545.14 389.04 L547.20 387.89 L549.87 387.83 L552.73 388.87 L555.35 390.85 L557.33 393.47 L558.37 396.33 L558.31 399.00 L557.16 401.06 M563.66 375.65 L561.56 375.19 L559.65 375.36 L558.10 376.12 L557.02 377.43 L556.52 379.16 L556.63 381.18 L557.35 383.30 L558.62 385.35 L560.32 387.15 L562.32 388.55 L564.44 389.43 L566.50 389.71 L568.33 389.38 L569.77 388.46 M577.81 383.30 L583.49 377.62 M572.63 361.55 L588.40 369.82 L580.13 354.05 M595.65 362.57 L583.63 350.55 L587.50 346.68 L587.50 346.68 L589.32 345.67 L591.46 345.73 L593.34 346.85 L594.46 348.73 L594.52 350.87 L593.51 352.69 L589.64 356.56 M593.05 353.15 L602.47 355.75 M612.89 345.33 L606.64 351.58 L594.62 339.56 L600.87 333.31 M600.27 345.21 L604.59 340.89 M610.88 323.30 L604.63 329.55 L616.65 341.57 M610.28 335.20 L614.60 330.88 M542.13 447.66 L539.95 447.20 L537.98 447.41 L536.40 448.27 L535.37 449.71 L534.96 451.58 L535.23 453.72 L536.15 455.93 L537.63 458.01 L539.54 459.75 L541.69 461.00 L543.90 461.65 L545.95 461.63 L547.65 460.95 L548.86 459.66 L549.45 457.90 L549.37 455.81 L546.01 451.88 L542.83 455.06 M555.85 452.85 L543.83 440.83 L547.69 436.97 L547.69 436.97 L549.51 435.95 L551.65 436.01 L553.54 437.14 L554.66 439.02 L554.72 441.16 L553.70 442.98 L549.84 446.84 M557.64 432.59 L556.82 430.40 L557.14 428.08 L558.52 426.17 L560.64 425.13 L562.98 425.22 L564.99 426.41 L565.96 427.84 L566.83 441.88 L573.87 434.84 M574.56 421.16 L572.71 422.27 L570.62 422.34 L568.84 421.35 L567.86 419.57 L567.93 417.48 L569.03 415.63 L570.88 414.53 L572.97 414.46 L574.75 415.44 L575.74 417.22 L575.67 419.31 L574.56 421.16 M574.56 421.16 L576.70 419.89 L579.14 419.83 L581.21 421.00 L582.38 423.08 L582.32 425.51 L581.05 427.65 L578.91 428.92 L576.48 428.98 L574.40 427.81 L573.23 425.74 L573.29 423.30 L574.56 421.16 M542.91 516.28 L534.64 500.51 L550.41 508.78 M540.19 511.06 L545.19 506.07 M551.55 488.72 L549.37 488.26 L547.40 488.47 L545.82 489.34 L544.79 490.77 L544.38 492.65 L544.65 494.79 L545.57 497.00 L547.05 499.07 L548.96 500.81 L551.11 502.07 L553.32 502.71 L555.37 502.69 L557.08 502.01 L558.28 500.73 L558.87 498.96 L558.79 496.88 L555.43 492.94 L552.25 496.12 M565.31 493.87 L553.29 481.85 L572.36 486.83 L560.34 474.81 M579.78 479.40 L576.94 482.24 L564.92 470.22 L567.76 467.38 L567.76 467.38 L569.83 466.23 L572.50 466.17 L575.36 467.21 L577.98 469.19 L579.96 471.81 L581.00 474.67 L580.94 477.34 L579.78 479.40 M541.50 549.26 L539.32 548.80 L537.35 549.01 L535.77 549.87 L534.73 551.31 L534.33 553.18 L534.60 555.32 L535.52 557.53 L537.00 559.61 L538.91 561.35 L541.06 562.60 L543.27 563.25 L545.32 563.23 L547.02 562.55 L548.23 561.26 L548.82 559.50 L548.74 557.41 L545.38 553.48 L542.20 556.66 M555.22 554.45 L543.20 542.43 L547.06 538.57 L547.06 538.57 L548.88 537.55 L551.02 537.61 L552.91 538.74 L554.03 540.62 L554.09 542.76 L553.07 544.58 L549.21 548.44 M557.01 534.19 L556.19 532.00 L556.51 529.68 L557.89 527.77 L560.01 526.73 L562.35 526.82 L564.36 528.01 L565.33 529.44 L566.19 543.48 L573.24 536.44 M564.88 520.75 L571.92 513.71 L579.40 530.27 M541.18 600.06 L539.00 599.60 L537.03 599.81 L535.46 600.67 L534.42 602.11 L534.02 603.98 L534.29 606.12 L535.20 608.33 L536.68 610.41 L538.59 612.15 L540.75 613.40 L542.95 614.05 L545.00 614.03 L546.71 613.35 L547.91 612.06 L548.50 610.30 L548.42 608.21 L545.06 604.28 L541.88 607.46 M554.90 605.25 L542.88 593.23 L546.74 589.37 L546.74 589.37 L548.57 588.35 L550.71 588.41 L552.59 589.54 L553.71 591.42 L553.77 593.56 L552.75 595.38 L548.89 599.24 M556.69 584.99 L555.87 582.80 L556.19 580.48 L557.58 578.57 L559.69 577.53 L562.03 577.62 L564.04 578.81 L565.01 580.24 L565.88 594.28 L572.92 587.24 M570.82 565.77 L568.65 567.46 L567.44 570.12 L567.89 573.52 L570.09 576.85 L573.09 579.85 L573.09 579.85 L571.74 577.59 L571.67 575.03 L572.89 572.84 L575.08 571.62 L577.65 571.69 L579.91 573.04 L581.25 575.30 L581.33 577.87 L580.11 580.05 L577.92 581.27 L575.35 581.20 L573.09 579.85 M543.23 667.41 L531.21 655.39 L535.07 651.53 L535.07 651.53 L536.89 650.51 L539.03 650.57 L540.91 651.70 L542.04 653.58 L542.10 655.72 L541.08 657.54 L537.22 661.40 M540.63 658.00 L550.04 660.60 M542.72 643.88 L551.14 652.29 L552.78 653.41 L554.69 653.84 L556.57 653.52 L558.15 652.49 L559.18 650.91 L559.51 649.02 L559.07 647.12 L557.95 645.48 L549.54 637.06 M566.53 644.11 L554.51 632.09 L573.57 637.07 L561.55 625.05 M540.55 701.66 L538.37 701.20 L536.40 701.41 L534.82 702.27 L533.79 703.71 L533.38 705.58 L533.65 707.72 L534.57 709.93 L536.05 712.01 L537.96 713.75 L540.11 715.00 L542.32 715.65 L544.37 715.63 L546.08 714.95 L547.28 713.66 L547.87 711.90 L547.79 709.81 L544.43 705.88 L541.25 709.06 M554.27 706.85 L542.25 694.83 L546.11 690.97 L546.11 690.97 L547.94 689.95 L550.08 690.01 L551.96 691.14 L553.08 693.02 L553.14 695.16 L552.12 696.98 L548.26 700.84 M556.06 686.59 L555.24 684.40 L555.56 682.08 L556.94 680.17 L559.06 679.13 L561.40 679.22 L563.41 680.41 L564.38 681.84 L565.25 695.88 L572.29 688.84 M566.88 675.77 L566.06 673.58 L566.38 671.26 L567.76 669.35 L569.88 668.31 L572.22 668.40 L574.23 669.59 L575.20 671.02 L576.07 685.06 L583.11 678.02 M540.24 752.46 L538.06 752.00 L536.09 752.21 L534.51 753.07 L533.47 754.51 L533.07 756.38 L533.34 758.52 L534.26 760.73 L535.74 762.81 L537.64 764.55 L539.80 765.80 L542.00 766.45 L544.05 766.43 L545.76 765.75 L546.96 764.46 L547.55 762.70 L547.48 760.61 L544.12 756.68 L540.94 759.86 M554.00 757.61 L541.98 745.59 L561.04 750.57 L549.02 738.55 M568.47 743.14 L565.63 745.98 L553.61 733.96 L556.45 731.12 L556.45 731.12 L558.51 729.97 L561.18 729.91 L564.04 730.95 L566.66 732.93 L568.64 735.55 L569.68 738.41 L569.62 741.08 L568.47 743.14 M539.92 803.26 L537.74 802.80 L535.77 803.01 L534.19 803.87 L533.15 805.31 L532.75 807.18 L533.02 809.32 L533.94 811.53 L535.42 813.61 L537.33 815.35 L539.48 816.60 L541.69 817.25 L543.74 817.23 L545.44 816.55 L546.65 815.26 L547.24 813.50 L547.16 811.41 L543.80 807.48 L540.62 810.66 M553.64 808.45 L541.62 796.43 L545.48 792.57 L545.48 792.57 L547.30 791.55 L549.44 791.61 L551.33 792.74 L552.45 794.62 L552.51 796.76 L551.49 798.58 L547.63 802.44 M555.43 788.19 L554.61 786.00 L554.93 783.68 L556.31 781.77 L558.43 780.73 L560.77 780.82 L562.78 782.01 L563.75 783.44 L564.62 797.48 L571.66 790.44 M566.85 776.49 L567.05 771.00 L579.07 783.03 M575.89 786.21 L582.02 780.07 M539.61 854.06 L537.42 853.60 L535.45 853.81 L533.88 854.67 L532.84 856.11 L532.44 857.98 L532.71 860.12 L533.62 862.33 L535.11 864.41 L537.01 866.15 L539.17 867.40 L541.37 868.05 L543.42 868.03 L545.13 867.35 L546.33 866.06 L546.92 864.30 L546.84 862.21 L543.48 858.28 L540.30 861.46 M553.32 859.25 L541.30 847.23 L545.17 843.37 L545.17 843.37 L546.99 842.35 L549.13 842.41 L551.01 843.54 L552.13 845.42 L552.19 847.56 L551.18 849.38 L547.31 853.24 M555.11 838.99 L554.29 836.80 L554.61 834.48 L556.00 832.57 L558.11 831.53 L560.45 831.62 L562.46 832.81 L563.44 834.24 L564.30 848.28 L571.34 841.24 M566.70 829.05 L565.36 826.79 L565.28 824.22 L566.51 822.03 L568.69 820.81 L571.26 820.88 L573.52 822.23 L578.33 827.04 L579.67 829.30 L579.75 831.87 L578.53 834.05 L576.34 835.27 L573.77 835.20 L571.51 833.85 L566.70 829.05 M539.29 904.86 L537.11 904.40 L535.14 904.61 L533.56 905.47 L532.52 906.91 L532.12 908.78 L532.39 910.92 L533.31 913.13 L534.79 915.21 L536.70 916.95 L538.85 918.20 L541.06 918.85 L543.11 918.83 L544.81 918.15 L546.02 916.86 L546.61 915.10 L546.53 913.01 L543.17 909.08 L539.99 912.26 M553.01 910.05 L540.99 898.03 L544.85 894.17 L544.85 894.17 L546.67 893.15 L548.81 893.21 L550.69 894.34 L551.82 896.22 L551.88 898.36 L550.86 900.18 L547.00 904.04 M555.40 888.91 L555.60 883.42 L567.62 895.44 M564.44 898.62 L570.57 892.49 M573.20 873.03 L574.55 875.29 L574.62 877.86 L573.40 880.04 L571.22 881.27 L568.65 881.19 L566.39 879.85 L565.04 877.59 L564.97 875.02 L566.19 872.83 L568.38 871.61 L570.94 871.68 L573.20 873.03 L576.21 876.04 L578.41 879.37 L578.97 882.89 L577.64 885.42 L575.47 887.11 M538.97 955.66 L536.79 955.20 L534.82 955.41 L533.24 956.27 L532.21 957.71 L531.80 959.58 L532.08 961.72 L532.99 963.93 L534.47 966.01 L536.38 967.75 L538.53 969.00 L540.74 969.65 L542.79 969.63 L544.50 968.95 L545.70 967.66 L546.29 965.90 L546.21 963.81 L542.85 959.88 L539.67 963.06 M552.69 960.85 L540.67 948.83 L544.53 944.97 L544.53 944.97 L546.36 943.95 L548.50 944.01 L550.38 945.14 L551.50 947.02 L551.56 949.16 L550.54 950.98 L546.68 954.84 M555.09 939.71 L555.28 934.22 L567.30 946.24 M564.12 949.42 L570.26 943.29 M571.40 929.16 L569.56 930.27 L567.46 930.34 L565.69 929.35 L564.70 927.57 L564.77 925.48 L565.87 923.63 L567.72 922.53 L569.81 922.46 L571.59 923.44 L572.58 925.22 L572.51 927.31 L571.40 929.16 M571.40 929.16 L573.54 927.89 L575.98 927.83 L578.06 929.00 L579.22 931.08 L579.16 933.51 L577.89 935.65 L575.76 936.92 L573.32 936.98 L571.24 935.81 L570.08 933.74 L570.13 931.30 L571.40 929.16 M538.66 1006.46 L536.48 1006.00 L534.51 1006.21 L532.93 1007.07 L531.89 1008.51 L531.49 1010.38 L531.76 1012.52 L532.68 1014.73 L534.16 1016.81 L536.06 1018.55 L538.22 1019.80 L540.42 1020.45 L542.47 1020.43 L544.18 1019.75 L545.38 1018.46 L545.98 1016.70 L545.90 1014.61 L542.54 1010.68 L539.36 1013.86 M552.42 1011.61 L540.40 999.59 L559.46 1004.57 L547.44 992.55 M566.89 997.14 L564.05 999.98 L552.03 987.96 L554.87 985.12 L554.87 985.12 L556.94 983.97 L559.60 983.91 L562.46 984.95 L565.08 986.93 L567.06 989.55 L568.10 992.41 L568.04 995.08 L566.89 997.14 M538.34 1057.26 L536.16 1056.80 L534.19 1057.01 L532.61 1057.87 L531.58 1059.31 L531.17 1061.18 L531.44 1063.32 L532.36 1065.53 L533.84 1067.61 L535.75 1069.35 L537.90 1070.60 L540.11 1071.25 L542.16 1071.23 L543.86 1070.55 L545.07 1069.26 L545.66 1067.50 L545.58 1065.41 L542.22 1061.48 L539.04 1064.66 M552.06 1062.45 L540.04 1050.43 L543.90 1046.57 L543.90 1046.57 L545.73 1045.55 L547.86 1045.61 L549.75 1046.74 L550.87 1048.62 L550.93 1050.76 L549.91 1052.58 L546.05 1056.44 M554.46 1041.31 L554.65 1035.82 L566.67 1047.84 M563.49 1051.02 L569.63 1044.89 M561.72 1028.75 L568.76 1021.71 L576.24 1038.27 M538.03 1108.06 L535.84 1107.60 L533.87 1107.81 L532.30 1108.67 L531.26 1110.11 L530.86 1111.98 L531.13 1114.12 L532.05 1116.33 L533.53 1118.41 L535.43 1120.15 L537.59 1121.40 L539.79 1122.05 L541.84 1122.03 L543.55 1121.35 L544.75 1120.06 L545.34 1118.30 L545.27 1116.21 L541.91 1112.28 L538.72 1115.46 M551.75 1113.25 L539.72 1101.23 L543.59 1097.37 L543.59 1097.37 L545.41 1096.35 L547.55 1096.41 L549.43 1097.54 L550.55 1099.42 L550.61 1101.56 L549.60 1103.38 L545.73 1107.24 M554.14 1092.11 L554.34 1086.62 L566.36 1098.64 M563.18 1101.82 L569.31 1095.69 M567.67 1073.77 L565.49 1075.46 L564.28 1078.12 L564.73 1081.52 L566.93 1084.85 L569.93 1087.85 L569.93 1087.85 L568.59 1085.59 L568.51 1083.03 L569.73 1080.84 L571.92 1079.62 L574.49 1079.69 L576.75 1081.04 L578.10 1083.30 L578.17 1085.87 L576.95 1088.05 L574.76 1089.27 L572.19 1089.20 L569.93 1087.85 M151.74 1137.92 L149.92 1136.32 L147.20 1136.00 L144.48 1136.48 L143.12 1138.08 L143.12 1140.80 L144.48 1142.40 L149.92 1144.80 L151.43 1146.40 L151.74 1148.80 L150.53 1151.20 L147.20 1152.00 L144.48 1151.52 L142.66 1150.08 M156.69 1136.00 L159.86 1152.00 L163.04 1140.80 L166.22 1152.00 L169.39 1136.00 M184.45 1139.41 L183.36 1137.71 L181.98 1136.55 L180.44 1136.03 L178.85 1136.18 L177.36 1137.00 L176.10 1138.41 L175.17 1140.31 L174.65 1142.51 L174.58 1144.85 L174.98 1147.11 L175.80 1149.10 L176.99 1150.67 L178.42 1151.66 L180.00 1152.00 M188.99 1136.00 L188.99 1152.00 L196.85 1152.00 M202.06 1136.00 L202.06 1152.00 M211.14 1136.00 L202.06 1145.92 M205.09 1142.72 L211.14 1152.00 M380.74 1137.92 L378.92 1136.32 L376.20 1136.00 L373.48 1136.48 L372.12 1138.08 L372.12 1140.80 L373.48 1142.40 L378.92 1144.80 L380.43 1146.40 L380.74 1148.80 L379.53 1151.20 L376.20 1152.00 L373.48 1151.52 L371.66 1150.08 M385.69 1136.00 L388.86 1152.00 L392.04 1140.80 L395.22 1152.00 L398.39 1136.00 M407.33 1152.00 L403.55 1152.00 L403.55 1136.00 L407.33 1136.00 L407.33 1136.00 L409.47 1136.61 L411.29 1138.34 L412.50 1140.94 L412.93 1144.00 L412.50 1147.06 L411.29 1149.66 L409.47 1151.39 L407.33 1152.00 M418.68 1136.00 L418.68 1152.00 M434.77 1144.00 L434.37 1147.06 L433.22 1149.66 L431.51 1151.39 L429.48 1152.00 L427.45 1151.39 L425.74 1149.66 L424.59 1147.06 L424.19 1144.00 L424.59 1140.94 L425.74 1138.34 L427.45 1136.61 L429.48 1136.00 L431.51 1136.61 L433.22 1138.34 L434.37 1140.94 L434.77 1144.00 M259.20 627.00 L259.20 607.40 L265.50 607.40 L265.50 607.40 L267.81 608.06 L269.51 609.85 L270.13 612.30 L269.51 614.75 L267.81 616.54 L265.50 617.20 L259.20 617.20 M264.76 617.20 L270.31 627.00 M287.30 627.00 L277.12 627.00 L277.12 607.40 L287.30 607.40 M277.12 616.61 L284.16 616.61 M303.62 607.40 L293.43 607.40 L293.43 627.00 M293.43 616.61 L300.47 616.61 M313.52 608.38 L313.52 620.14 M308.71 611.32 L318.34 617.20 M318.34 611.32 L308.71 617.20 M327.63 608.38 L327.63 620.14 M322.82 611.32 L332.45 617.20 M332.45 611.32 L322.82 617.20"/></svg></div>
<svg width="686" height="720" style="position:absolute;left:0;top:0"><path d="M442.0 204.6 Q447.2 205.0 449.0 200.6 Q446.4 202.6 442.0 204.6 Z" fill="#c4c4dc" stroke="#c4c4dc" stroke-width="0.7" stroke-linejoin="round"/><path d="M483.6 224.4 Q488.8 224.8 490.8 220.6 Q488.0 222.6 483.6 224.4 Z" fill="#c4c4dc" stroke="#c4c4dc" stroke-width="0.7" stroke-linejoin="round"/><line x1="629.4" y1="220.9" x2="281.1" y2="694.9" stroke="#7a5a1c" stroke-width="0.8" stroke-dasharray="1 3.2" opacity="0.8"/></svg>
</body></html>
